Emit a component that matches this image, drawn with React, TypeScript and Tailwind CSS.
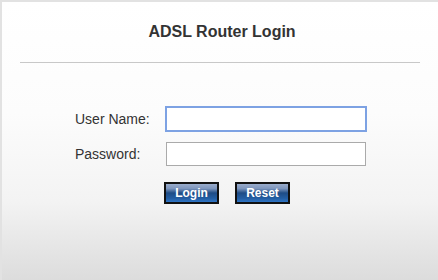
export default function App() {
  return (
    <div className="h-[280px] w-[438px] overflow-hidden font-['Liberation_Sans',Arial,sans-serif]">
      <div className="flex h-full flex-col border-l-2 border-t-2 border-[#e2e2e2] bg-[linear-gradient(to_bottom,#ffffff_0%,#fcfcfc_40%,#f3f3f3_72%,#dcdcdc_100%)]">
        <h1 className="pl-[4px] pt-[19px] text-center text-[16px] font-bold leading-[22px] text-[#333]">
          ADSL Router Login
        </h1>
        <div className="mx-[18px] mt-[19px] h-px bg-[#c8c8c8]" />
        <form className="mt-[43px] flex flex-col items-center" onSubmit={(e) => e.preventDefault()}>
          <div className="grid grid-cols-[90px_202px] items-center gap-y-[10px] pl-[2px]">
            <label className="text-[14px] text-[#333]">User Name:</label>
            <input
              autoFocus
              className="h-[26px] w-[202px] border-2 border-[#7da2e3] bg-white px-1 text-[14px] text-black outline-none"
            />
            <label className="text-[14px] text-[#333]">Password:</label>
            <input
              type="password"
              className="ml-px h-[24px] w-[200px] border border-[#aaa] bg-white px-1 text-[14px] outline-none"
            />
          </div>
          <div className="mt-[16px] flex gap-[16px] pl-[14px]">
            {["Login", "Reset"].map((b) => (
              <button
                key={b}
                className="h-[22px] w-[55px] border-2 border-[#111] bg-[linear-gradient(to_bottom,#9aaccb_0%,#7e96bd_25%,#1e4c86_50%,#235ea3_80%,#2f74c4_100%)] text-[12px] font-bold leading-none text-white"
              >
                {b}
              </button>
            ))}
          </div>
        </form>
      </div>
    </div>
  );
}
